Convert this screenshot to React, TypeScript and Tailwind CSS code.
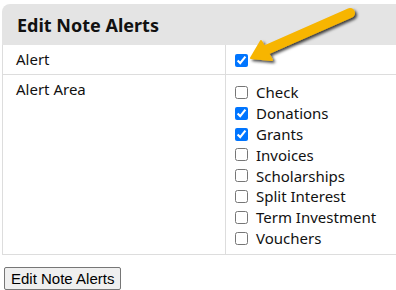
import React from "react";

const areas = [
  { label: "Check", checked: false },
  { label: "Donations", checked: true },
  { label: "Grants", checked: true },
  { label: "Invoices", checked: false },
  { label: "Scholarships", checked: false },
  { label: "Split Interest", checked: false },
  { label: "Term Investment", checked: false },
  { label: "Vouchers", checked: false },
];

function Arrow() {
  return (
    <svg
      className="absolute left-0 top-0 pointer-events-none"
      width="396"
      height="100"
      viewBox="0 0 396 100"
    >
      <defs>
        <filter id="sh" x="-20%" y="-50%" width="140%" height="200%">
          <feDropShadow dx="2" dy="2" stdDeviation="1.5" floodColor="#000" floodOpacity="0.75" />
        </filter>
      </defs>
      <g filter="url(#sh)">
        <line x1="350" y1="13" x2="266" y2="50" stroke="#f7b500" strokeWidth="10" strokeLinecap="round" />
        <polygon points="251,58 261,41 272,60" fill="#f7b500" stroke="#f7b500" strokeWidth="2" strokeLinejoin="round" />
      </g>
    </svg>
  );
}

export default function App() {
  return (
    <div className="relative w-[396px] h-[290px] overflow-hidden bg-white" style={{ fontFamily: '"Noto Sans", sans-serif' }}>
      <div className="pt-[4px] pl-[2px]">
        <div className="w-[440px]">
          <div className="h-[41px] bg-[#e4e4e4] rounded-tl-[8px] flex items-center pl-[15px]">
            <span className="text-[18px] font-bold text-[#111] leading-none">Edit Note Alerts</span>
          </div>
          <div className="border-l border-b border-[#dddddd]">
            <div className="flex h-[30px] border-b border-[#dddddd]">
              <div className="w-[223px] border-r border-[#dddddd] pl-[13px] pt-[3px] text-[15px] text-[#111]">Alert</div>
              <div className="flex-1 pl-[9px] pt-[9px]">
                <input type="checkbox" defaultChecked className="m-0 w-[13px] h-[13px] align-top" />
              </div>
            </div>
            <div className="flex">
              <div className="w-[223px] border-r border-[#dddddd] pl-[13px] pt-[3px] text-[15px] text-[#111]">Alert Area</div>
              <div className="flex-1 pl-[9px] pt-[7px] pb-[5px]">
                {areas.map((a) => (
                  <label key={a.label} className="flex items-center h-[20.85px] text-[15px] text-[#111]">
                    <input type="checkbox" defaultChecked={a.checked} className="m-0 w-[13px] h-[13px] mr-[8px]" />
                    {a.label}
                  </label>
                ))}
              </div>
            </div>
          </div>
        </div>
        <div className="mt-[11px] ml-[2px]">
          <button
            className="h-[23px] px-[6px] bg-[#efefef] border border-[#767676] rounded-[2px] text-[15px] text-black leading-none"
            style={{ fontFamily: '"Liberation Sans", Arial, sans-serif' }}
          >
            Edit Note Alerts
          </button>
        </div>
      </div>
      <Arrow />
    </div>
  );
}
